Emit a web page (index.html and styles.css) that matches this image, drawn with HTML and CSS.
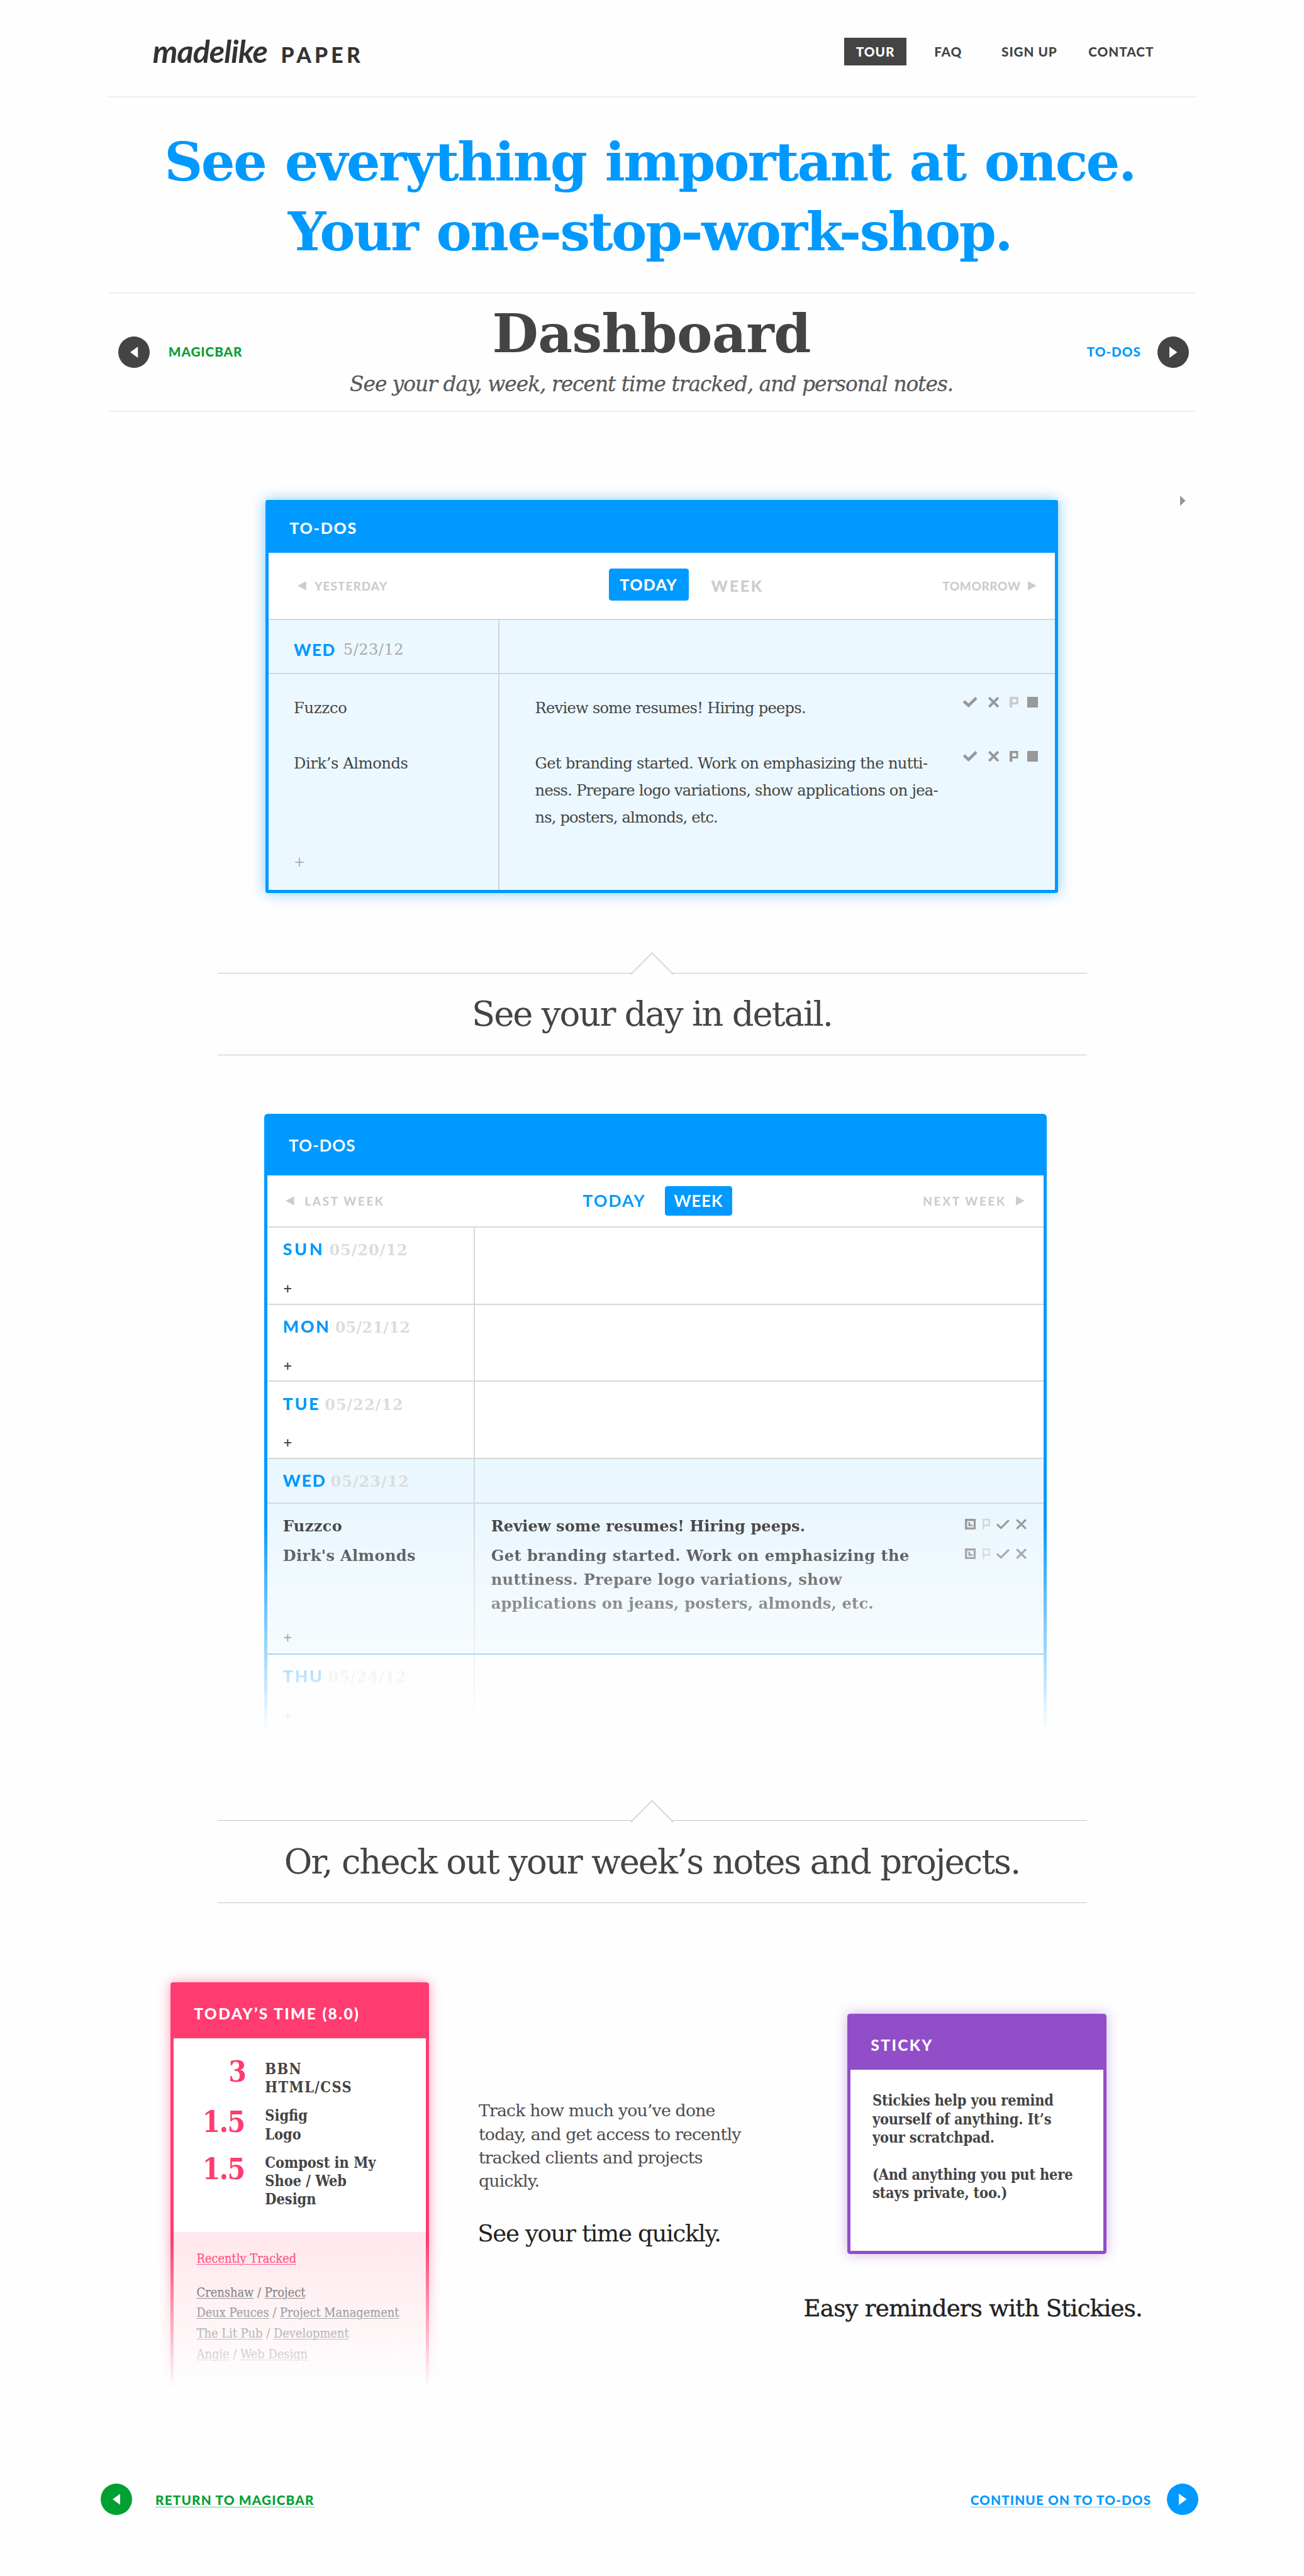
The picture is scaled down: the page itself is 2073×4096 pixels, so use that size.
FILE: index.html
```html
<!DOCTYPE html>
<html lang="en">
<head>
<meta charset="utf-8">
<title>Madelike Paper – Dashboard tour</title>
<link rel="stylesheet" href="styles.css">
</head>
<body>
<svg class="defs" width="0" height="0">
  <symbol id="left" viewBox="0 0 16 18" preserveAspectRatio="none"><path d="M16 0v18L0 9z"/></symbol>
  <symbol id="right" viewBox="0 0 16 18" preserveAspectRatio="none"><path d="M0 0v18l16-9z"/></symbol>
  <symbol id="check" viewBox="0 0 26 20"><path d="M1.500 8l8.500 8L24.500 2" fill="none" stroke="currentColor" stroke-width="5.4"/></symbol>
  <symbol id="cross" viewBox="0 0 20 20"><path d="M1.500 1.500l17 17M18.500 1.500l-17 17" fill="none" stroke="currentColor" stroke-width="4.6"/></symbol>
  <symbol id="flag" viewBox="0 0 16 20"><path fill-rule="evenodd" d="M0 0h16v14H5v6H0zM5 4v6h7V4z"/></symbol>
  <symbol id="square" viewBox="0 0 20 20"><path d="M0 0h20v20H0z"/></symbol>
  <symbol id="clock" viewBox="0 0 20 20"><path d="M2 2h16v16H2z" fill="none" stroke="currentColor" stroke-width="4"/><path d="M8 6v6h6" fill="none" stroke="currentColor" stroke-width="3.4"/></symbol>
  <symbol id="thincheck" viewBox="0 0 24 20"><path d="M1 10l7.500 7L23 2.500" fill="none" stroke="currentColor" stroke-width="3.6"/></symbol>
  <symbol id="thincross" viewBox="0 0 20 20"><path d="M1.500 1.500l17 17M18.500 1.500l-17 17" fill="none" stroke="currentColor" stroke-width="3.6"/></symbol>
  <symbol id="thinflag" viewBox="0 0 14 20"><path d="M1.500 20V1.500H12.500V12H1.500" fill="none" stroke="currentColor" stroke-width="3"/></symbol>
</svg>

<header class="site">
  <div class="logo"><span class="script">madelike</span><span class="paper">PAPER</span></div>
  <nav>
    <a class="on">TOUR</a><a>FAQ</a><a>SIGN UP</a><a class="contact">CONTACT</a>
  </nav>
</header>

<h1><span>See everything important at once.</span><br><span class="second">Your one-stop-work-shop.</span></h1>

<section class="pager">
  <a class="prev green"><i class="disc"><svg><use href="#left"/></svg></i>MAGICBAR</a>
  <div class="title">
    <h2>Dashboard</h2>
    <p>See your day, week, recent time tracked, and personal notes.</p>
  </div>
  <a class="next blue">TO-DOS<i class="disc"><svg><use href="#right"/></svg></i></a>
</section>

<section class="stage">
  <div class="card today">
    <h3>TO-DOS</h3>
    <div class="tabs">
      <span class="prev"><svg><use href="#left"/></svg>YESTERDAY</span>
      <b class="pill">TODAY</b>
      <span class="week">WEEK</span>
      <span class="next">TOMORROW<svg><use href="#right"/></svg></span>
    </div>
    <div class="row head">
      <div class="who"><b class="day">WED</b><span class="date">5/23/12</span></div>
    </div>
    <div class="row first">
      <div class="who tight">Fuzzco</div>
      <div class="what">Review some resumes! Hiring peeps.</div>
      <div class="icons"><svg class="i26"><use href="#check"/></svg><svg class="i20"><use href="#cross"/></svg><svg class="i16 off"><use href="#flag"/></svg><svg class="i20 sq"><use href="#square"/></svg></div>
    </div>
    <div class="row">
      <div class="who">Dirk’s Almonds</div>
      <div class="what"><span class="open">Get branding started. Work on emphasizing the nutti-</span><br>ness. Prepare logo variations, show applications on jea-<br><span class="close">ns, posters, almonds, etc.</span></div>
      <div class="icons"><svg class="i26"><use href="#check"/></svg><svg class="i20"><use href="#cross"/></svg><svg class="i16"><use href="#flag"/></svg><svg class="i20 sq"><use href="#square"/></svg></div>
    </div>
    <div class="row last"><div class="who add">+</div></div>
  </div>
  <svg class="caret"><use href="#right"/></svg>
</section>

<section class="divider">
  <svg class="peak" viewBox="0 0 80 42"><path d="M1 41L40 1.500 79 41"/></svg>
  <h2>See your day in detail.</h2>
</section>

<section class="card weekly">
  <h3>TO-DOS</h3>
  <div class="tabs">
    <span class="prev"><svg><use href="#left"/></svg>LAST WEEK</span>
    <span class="tab">TODAY</span>
    <b class="pill">WEEK</b>
    <span class="next">NEXT WEEK<svg><use href="#right"/></svg></span>
  </div>
  <div class="row"><div class="who"><b class="day sun">SUN</b><span class="date">05/20/12</span><div class="add">+</div></div></div>
  <div class="row"><div class="who"><b class="day">MON</b><span class="date narrow">05/21/12</span><div class="add">+</div></div></div>
  <div class="row"><div class="who"><b class="day">TUE</b><span class="date">05/22/12</span><div class="add">+</div></div></div>
  <div class="row tint head"><div class="who"><b class="day wed">WED</b><span class="date">05/23/12</span></div></div>
  <div class="row tint tasks">
    <div class="who"><p>Fuzzco</p><p>Dirk's Almonds</p><div class="add">+</div></div>
    <div class="what"><p class="short">Review some resumes! Hiring peeps.</p><p><span class="open">Get branding started. Work on emphasizing the</span><br>nuttiness. Prepare logo variations, show<br><span class="close">applications on jeans, posters, almonds, etc.</span></p></div>
    <div class="icons">
      <div><svg class="i20"><use href="#clock"/></svg><svg class="i14 off"><use href="#thinflag"/></svg><svg class="i24"><use href="#thincheck"/></svg><svg class="i20"><use href="#thincross"/></svg></div>
      <div><svg class="i20"><use href="#clock"/></svg><svg class="i14 off"><use href="#thinflag"/></svg><svg class="i24"><use href="#thincheck"/></svg><svg class="i20"><use href="#thincross"/></svg></div>
    </div>
  </div>
  <div class="row thu"><div class="who"><b class="day">THU</b><span class="date">05/24/12</span><div class="add">+</div></div></div>
</section>

<section class="divider lower">
  <svg class="peak" viewBox="0 0 80 42"><path d="M1 41L40 1.500 79 41"/></svg>
  <h2>Or, check out your week’s notes and projects.</h2>
</section>

<section class="features">
  <div class="card time">
    <h3>TODAY’S TIME (8.0)</h3>
    <div class="entries">
      <b class="three">3</b><p><span class="wide">BBN<br>HTML/CSS</span></p>
      <b>1.5</b><p>Sigfig<br>Logo</p>
      <b>1.5</b><p>Compost in My<br>Shoe / Web<br>Design</p>
    </div>
    <div class="recent">
      <p class="lead"><u>Recently Tracked</u></p>
      <p><u>Crenshaw</u> / <u>Project</u></p>
      <p><u>Deux Peuces</u> / <u>Project Management</u></p>
      <p><u>The Lit Pub</u> / <u>Development</u></p>
      <p><u>Angie</u> / <u>Web Design</u></p>
    </div>
  </div>
  <div class="copy">
    <p>Track how much you’ve done<br>today, and get access to recently<br>tracked clients and projects<br>quickly.</p>
    <h4>See your time quickly.</h4>
  </div>
  <div class="notes">
    <div class="card sticky">
      <h3>STICKY</h3>
      <p>Stickies help you remind<br>yourself of anything. It’s<br>your scratchpad.</p>
      <p>(And anything you put here<br>stays private, too.)</p>
    </div>
    <h4>Easy reminders with Stickies.</h4>
  </div>
</section>

<footer>
  <a class="green"><i class="disc"><svg><use href="#left"/></svg></i><span>RETURN TO MAGICBAR</span></a>
  <a class="blue"><span>CONTINUE ON TO TO-DOS</span><i class="disc"><svg><use href="#right"/></svg></i></a>
</footer>
</body>
</html>
```
FILE: styles.css
```css
/* 1rem = 10 units of the 2400-unit-wide layout grid */
html { font-size: 8.6375px; }
* { box-sizing: border-box; margin: 0; padding: 0; }
body {
  width: 240rem;
  height: 474.2rem;
  overflow: hidden;
  background: #fefefe;
  color: #444;
  font-family: "DejaVu Serif", serif;
  font-size: 2.8rem;
}
svg { display: block; fill: currentColor; flex: none; }
.defs { position: absolute; }
h1, h2, h4 { font-weight: normal; }

/* header */
.site {
  display: flex;
  justify-content: space-between;
  align-items: center;
  height: 18rem;
  margin: 0 20rem;
  padding: 1.2rem 4rem 0 8.1rem;
  border-bottom: 2px solid #ededed;
}
.logo { display: flex; align-items: baseline; color: #333; font-family: Lato, sans-serif; }
.script { width: 23.6rem; font-size: 5.8rem; line-height: 6rem; font-style: italic; font-weight: 700; letter-spacing: -.018em; }
.paper { font-size: 3.9rem; font-weight: 900; letter-spacing: .155em; }
nav {
  display: grid;
  grid-template-columns: 11.4rem 15.4rem 14.5rem 19.3rem;
  font: 900 2.4rem/5.1rem Lato, sans-serif;
  letter-spacing: .045em;
  text-align: center;
}
nav a { height: 5rem; }
nav .on { background: #444; color: #fff; }

/* hero */
h1 {
  height: 35.8rem;
  padding: 5.5rem .8rem 0 0;
  color: #09f;
  font-weight: bold;
  font-size: 9.8rem;
  line-height: 12.8rem;
  text-align: center;
  letter-spacing: -.03em;
  word-spacing: .04em;
}

.pager {
  display: grid;
  grid-template-columns: 1fr auto 1fr;
  align-items: center;
  height: 22rem;
  margin: 0 20rem;
  padding: 0 1.2rem 0 1.8rem;
  border: solid #ededed;
  border-width: 2px 0;
  text-align: center;
}
.pager a, footer a { display: flex; align-items: center; font: 900 2.4rem/2.4rem Lato, sans-serif; letter-spacing: .045em; }
.pager .prev { gap: 3.4rem; }
.pager .next { gap: 3rem; justify-content: flex-end; }
.green { color: #00a033; }
.blue { color: #09f; }
.disc {
  display: flex;
  align-items: center;
  justify-content: center;
  width: 5.8rem;
  height: 5.8rem;
  border-radius: 50%;
  background: #444;
  color: #fff;
}
.disc svg { width: 1.45rem; height: 2.1rem; }
.title { padding-right: .8rem; }
.pager h2 { padding-top: .2rem; font-weight: bold; font-size: 9.8rem; line-height: 10rem; letter-spacing: -.007em; }
.pager p { margin-top: 1.8rem; font-size: 3.8rem; line-height: 5rem; font-style: italic; letter-spacing: -.0298em; color: #58595b; white-space: nowrap; -webkit-text-stroke: .3px; }

/* cards */
.card { border: .6rem solid #09f; background: #fff; }
.card h3 { color: #fff; font: 900 2.9rem/1 Lato, sans-serif; letter-spacing: .07em; display: flex; align-items: center; }
.tabs { display: flex; align-items: center; font: 900 2.2rem/1 Lato, sans-serif; color: #ccc; }
.tabs span { display: flex; align-items: center; }
.tabs svg { width: 1.6rem; height: 1.7rem; }
.tabs .next { margin-left: auto; }
.pill { background: #09f; color: #fff; border-radius: .5rem; text-align: center; }
.row { display: flex; border-top: 2px solid #d6d7d8; }
.who { flex: none; border-right: 2px solid #d6d7d8; }
.day { color: #09f; font-family: Lato, sans-serif; font-weight: 900; }
.icons { display: flex; margin-left: auto; color: #999; }
.icons .off { color: #ccc; }
.i14 { width: 1.4rem; height: 2rem; }
.i16 { width: 1.6rem; height: 2rem; }
.i20 { width: 2rem; height: 2rem; }
.i24 { width: 2.4rem; height: 2rem; }
.i26 { width: 2.6rem; height: 2rem; }

.stage { display: flex; align-items: flex-start; padding: 16.2rem 0 0 48.8rem; }
.caret { width: 1rem; height: 1.9rem; margin: -.8rem 0 0 22.5rem; color: #939598; }
.today { width: 145.9rem; height: 72.4rem; border-radius: .4rem; box-shadow: 0 0 2.6rem rgba(0, 153, 255, .5); line-height: 5rem; letter-spacing: -.031em; display: flex; flex-direction: column; }
.today h3 { height: 9.2rem; flex: none; padding-left: 3.9rem; background: #09f; }
.today .tabs { height: 12.1rem; flex: none; }
.today .tabs .prev { width: 62.66rem; padding-left: 5.4rem; gap: 1.5rem; letter-spacing: .055em; }
.today .pill { width: 14.7rem; margin-top: -.4rem; font-size: 2.9rem; line-height: 5.9rem; letter-spacing: .05em; }
.today .week { margin-left: 4.15rem; font-size: 2.9rem; letter-spacing: .108em; }
.today .next { padding-right: 3.3rem; gap: 1.4rem; letter-spacing: .03em; }
.today .row { height: 15rem; border-top: 0; background: #ecf8ff; }
.today .who { width: 42.6rem; padding-left: 4.7rem; letter-spacing: -.017em; }
.today .tight { letter-spacing: -.01em; }
.today .what { padding-left: 6.5rem; white-space: nowrap; }
.today .open { letter-spacing: -.0272em; }
.today .close { letter-spacing: -.0357em; }
.today .head { height: 10rem; border-top: 2px solid #d6d7d8; }
.today .head .who { display: flex; align-items: center; padding-top: 1.3rem; }
.today .day { font-size: 3rem; letter-spacing: .06em; }
.today .date { margin-left: 1.4rem; color: #aaa; letter-spacing: .018em; }
.today .first { height: 14.2rem; border-top: 2px solid #d6d7d8; }
.today .first > div { padding-top: 3.8rem; }
.today .row.last { flex: 1; height: auto; }
.today .add { padding-top: 3.1rem; color: #aaa; font-size: 2.5rem; }
.today .icons { gap: 2rem; padding: .2rem 3.1rem 0 0; }
.today .first .icons { padding-top: 4.2rem; }
.today .sq { margin-left: -.4rem; }

/* section dividers */
.divider {
  position: relative;
  display: flex;
  align-items: center;
  justify-content: center;
  height: 15.2rem;
  margin: 14.7rem 40rem 10.7rem;
  border: solid #c6c6c6;
  border-width: 1px 0;
}
.divider h2 { font-size: 6.3rem; line-height: 10rem; letter-spacing: -.0368em; }
.peak { position: absolute; left: 76rem; top: -3.9rem; width: 8rem; height: 4.2rem; fill: #fefefe; stroke: #d2d2d2; stroke-width: 2; }
.divider.lower { margin: 16.5rem 40rem 0; }

/* weekly card, fading out towards its foot */
.weekly {
  width: 144rem;
  height: 113.6rem;
  margin-left: 48.6rem;
  border-bottom: 0;
  border-radius: .6rem .6rem 0 0;
  font-weight: bold;
  line-height: 4.4rem;
  letter-spacing: .0128em;
  -webkit-mask-image: linear-gradient(#000 66%, transparent);
  mask-image: linear-gradient(#000 66%, transparent);
}
.weekly h3 { height: 10.8rem; padding-left: 4rem; background: #09f; font-size: 3rem; font-weight: 700; letter-spacing: .038em; }
.weekly .tabs { height: 9.4rem; font-size: 2.2rem; }
.weekly .tabs .prev { width: 58.1rem; padding-left: 3.4rem; gap: 1.9rem; letter-spacing: .135em; }
.weekly .tab { width: 15.1rem; color: #09f; font-size: 3.1rem; font-weight: 700; letter-spacing: .07em; }
.weekly .pill { width: 12.4rem; font-size: 3rem; font-weight: 700; line-height: 5.4rem; letter-spacing: .035em; }
.weekly .next { padding-right: 3.4rem; gap: 1.8rem; letter-spacing: .138em; }
.weekly .row { height: 14.2rem; }
.weekly .who { width: 38.2rem; padding: 2rem 0 0 2.9rem; }
.weekly .day { font-size: 3.1rem; line-height: 4rem; letter-spacing: .1em; }
.weekly .sun { letter-spacing: .14em; }
.weekly .wed { letter-spacing: .06em; }
.weekly .date { margin-left: .8rem; color: #dcdcdc; line-height: 4rem; letter-spacing: .035em; }
.weekly .narrow { letter-spacing: .005em; }
.weekly .add { margin-top: 3.3rem; font-size: 2.1rem; line-height: 3rem; }
.weekly .head { height: 8.2rem; }
.weekly .tint { background: #ebf7fe; }
.weekly .tasks { height: 27.8rem; }
.weekly .tasks p + p { margin-top: 1rem; }
.weekly .tasks .add { margin-top: 11.4rem; }
.weekly .what { padding: 2rem 0 0 3rem; }
.weekly .short { letter-spacing: .001em; }
.weekly .open { letter-spacing: .0177em; }
.weekly .close { letter-spacing: .006em; }
.weekly .icons { flex-direction: column; gap: 3.4rem; padding: 2.8rem 3rem 0 0; }
.weekly .icons div { display: flex; gap: 1.2rem; }
.weekly .icons .off { color: #d6d6d6; }
.weekly .thu { border-color: #09f; }

/* feature columns */
.features { display: flex; align-items: flex-start; padding: 14.6rem 0 0 31.4rem; }
.features .card { width: 47.6rem; border-radius: .5rem; }
.features h3 { padding: .8rem 0 0 3.7rem; font-size: 2.85rem; letter-spacing: .095em; }
.time { position: relative; height: 74.8rem; border-color: #ff3b6f; border-bottom: 0; box-shadow: 0 0 2.4rem rgba(255, 59, 111, .5); }
.time::after {
  content: "";
  position: absolute;
  left: -4rem;
  right: -4rem;
  bottom: -4rem;
  height: 31.4rem;
  background: linear-gradient(rgba(254, 254, 254, 0), #fefefe 27.4rem);
}
.time h3 { height: 9.8rem; background: #ff3b6f; }
.entries {
  display: grid;
  grid-template-columns: 13.2rem 1fr;
  column-gap: 3.6rem;
  row-gap: 1.8rem;
  height: 35.6rem;
  align-content: start;
  padding-top: 3.9rem;
  font: bold 2.7rem/3.4rem "DejaVu Serif Condensed", "DejaVu Serif", serif;
}
.entries b { height: 6rem; padding-right: .2rem; color: #ff3b6f; font-size: 5.3rem; line-height: 6rem; text-align: right; letter-spacing: -.035em; }
.entries .three { margin-top: -.7rem; padding: 0; }
.wide { letter-spacing: .06em; }
.recent { height: 28.8rem; padding: 3.2rem 0 0 4.2rem; background: #ffe8ed; font: 2.3rem/3.8rem "DejaVu Serif Condensed", "DejaVu Serif", serif; -webkit-text-stroke: .2px; }
.recent u { text-underline-offset: .12em; text-decoration-thickness: 1px; }
.lead { margin-bottom: 2.35rem; color: #ff3b6f; }
.copy { width: 50rem; margin: 21.5rem 0 0 9.1rem; font-size: 3.1rem; line-height: 4.3rem; letter-spacing: -.031em; white-space: nowrap; color: #4c4c4c; }
h4 { color: #222; font-size: 4.3rem; line-height: 6rem; letter-spacing: -.0364em; white-space: nowrap; }
.copy h4 { margin-top: 4.6rem; margin-left: -.2rem; }
.notes { margin: 5.8rem 0 0 9.8rem; }
.notes h4 { margin-top: 7.1rem; letter-spacing: -.0204em; -webkit-text-stroke: .4px; }
.sticky { height: 44.2rem; margin-left: 8.1rem; border-color: #924dc8; box-shadow: 0 0 2.4rem rgba(146, 77, 200, .42); font: bold 2.7rem/3.4rem "DejaVu Serif Condensed", "DejaVu Serif", serif; letter-spacing: -.008em; }
.sticky h3 { height: 9.8rem; margin-bottom: 3.9rem; background: #924dc8; }
.sticky p { margin: 0 0 3.4rem 4rem; white-space: nowrap; }

/* footer links */
footer { display: flex; justify-content: space-between; padding: 17.5rem 19.4rem 0 18.5rem; }
footer a { gap: 4.3rem; letter-spacing: .0575em; }
footer .blue { gap: 2.9rem; letter-spacing: .054em; }
footer span { margin-top: .5rem; border-bottom: 1px solid rgba(0, 153, 255, .55); }
footer .green span { border-color: rgba(0, 160, 51, .55); }
footer .green .disc { background: #00a033; }
footer .blue .disc { background: #09f; }
```
